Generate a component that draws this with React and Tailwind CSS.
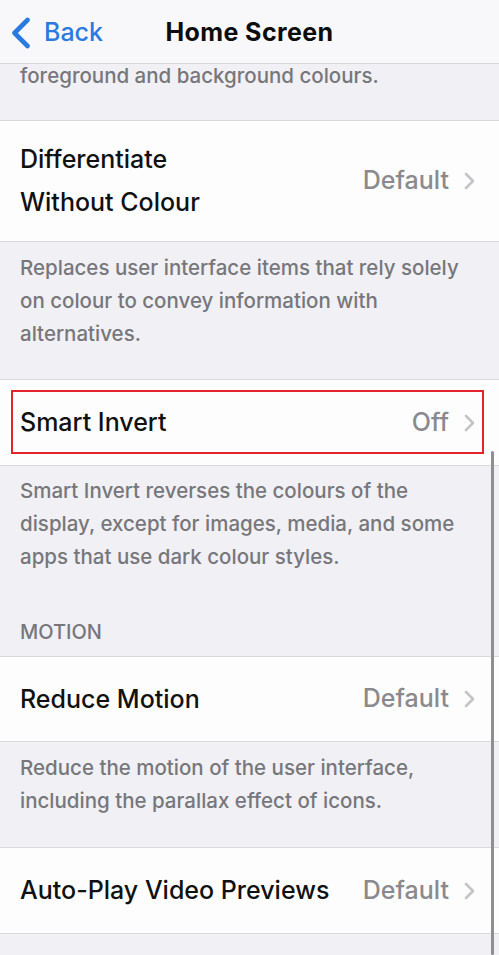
import React from "react";

const font = { fontFamily: "Inter, 'Noto Sans', 'Liberation Sans', sans-serif" };

function Chevron() {
  return (
    <svg width="12" height="18" viewBox="0 0 12 18" className="ml-[14px] shrink-0">
      <polyline points="3,2 10,9 3,16" fill="none" stroke="#c4c4c8" strokeWidth="2.6" strokeLinecap="round" strokeLinejoin="round" />
    </svg>
  );
}

function Cell({ title, value, height, highlight }) {
  return (
    <div className={`relative flex items-center justify-between bg-[#fdfdfd] border-y border-[#dadadd] pl-5 pr-[24px] ${height}`}>
      <div className="text-[25px] font-medium leading-[43px] text-[#111111]">{title}</div>
      <div className="flex items-center">
        <span className="text-[25px] font-medium text-[#8a8a8e]">{value}</span>
        <Chevron />
      </div>
      {highlight && (
        <div className="absolute left-[11px] right-[15px] top-[10px] bottom-[11px] border-2 border-[#e3232d]" />
      )}
    </div>
  );
}

function Note({ children, className }) {
  return (
    <div className={`px-5 text-[20.5px] font-medium leading-[33px] text-[#77777b] ${className}`}>{children}</div>
  );
}

export default function App() {
  return (
    <div className="relative h-[955px] w-full overflow-hidden bg-[#f0f0f5]" style={font}>
      <div className="grid h-[64px] grid-cols-[1fr_auto_1fr] items-center border-b border-[#d6d6d9] bg-[#f8f8fa] pt-[3px]">
        <div className="flex items-center pl-[11px]">
          <svg width="20" height="32" viewBox="0 0 20 32">
            <polyline points="16.5,3 3.5,16 16.5,29" fill="none" stroke="#2a7be0" strokeWidth="4.6" strokeLinecap="round" strokeLinejoin="round" />
          </svg>
          <span className="ml-[13px] text-[25px] font-medium text-[#2a7be0]">Back</span>
        </div>
        <div className="text-[25px] font-bold tracking-[0.4px] text-[#0d0d0d]">Home Screen</div>
        <div />
      </div>

      <Note className="-mt-[5px] h-[61px]">foreground and background colours.</Note>

      <Cell
        title={<>Differentiate<br />Without Colour</>}
        value="Default"
        height="h-[122px]"
      />

      <Note className="pt-[9px] h-[137px]">
        Replaces user interface items that rely solely on colour to convey information with alternatives.
      </Note>

      <Cell title="Smart Invert" value="Off" height="h-[87px]" highlight />

      <Note className="pt-[8px]">
        Smart Invert reverses the colours of the display, except for images, media, and some apps that use dark colour styles.
      </Note>
      <div className="px-5 pt-[47px] pb-[12px] text-[20px] font-medium leading-[24px] text-[#77777b]">MOTION</div>

      <Cell title="Reduce Motion" value="Default" height="h-[86px]" />

      <Note className="pt-[9px] h-[105px]">
        Reduce the motion of the user interface, including the parallax effect of icons.
      </Note>

      <Cell title="Auto-Play Video Previews" value="Default" height="h-[87px]" />

      <div className="absolute right-[5px] top-[451px] bottom-0 w-[3px] rounded-full bg-[#8f8f93]" />
    </div>
  );
}
